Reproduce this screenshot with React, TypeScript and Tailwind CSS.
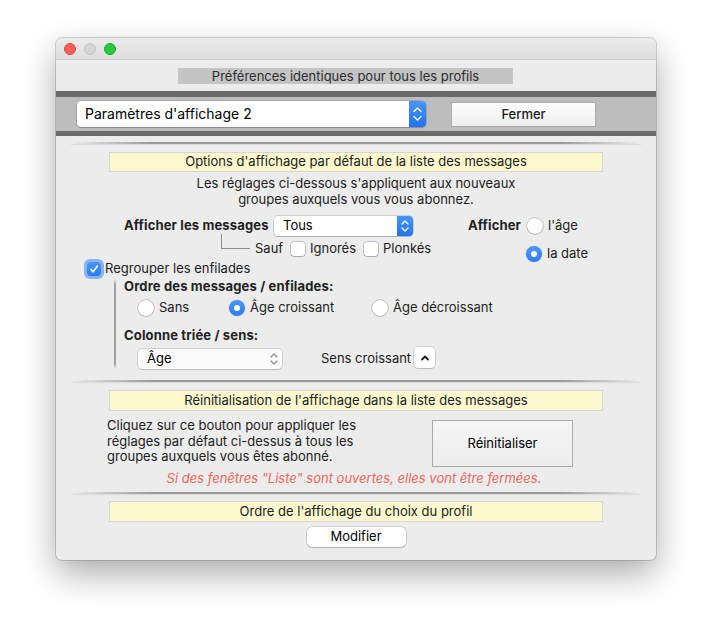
import React from "react";

function BlueStepper({ h, w }: { h: number; w: number }) {
  const big = h > 22;
  return (
    <div
      className={
        "flex shrink-0 items-center justify-center rounded-r-[4px] bg-linear-to-b from-[#4a95fb] to-[#1f72f1] " +
        (big ? "w-[17px] h-[26px]" : "w-[16px] h-[20px]")
      }
    >
      <svg width={w} height={h} viewBox={`0 0 ${w} ${h}`} fill="none">
        {big ? (
          <>
            <path d="M5 10.5 L8.5 7 L12 10.5" stroke="white" strokeWidth="1.4" strokeLinecap="round" strokeLinejoin="round" />
            <path d="M5 15.5 L8.5 19 L12 15.5" stroke="white" strokeWidth="1.4" strokeLinecap="round" strokeLinejoin="round" />
          </>
        ) : (
          <>
            <path d="M5 8 L8 5 L11 8" stroke="white" strokeWidth="1.3" strokeLinecap="round" strokeLinejoin="round" />
            <path d="M5 12 L8 15 L11 12" stroke="white" strokeWidth="1.3" strokeLinecap="round" strokeLinejoin="round" />
          </>
        )}
      </svg>
    </div>
  );
}

function Radio({ checked }: { checked?: boolean }) {
  return checked ? (
    <span className="flex h-[16px] w-[16px] shrink-0 items-center justify-center rounded-full bg-linear-to-b from-[#4b96fb] to-[#2a7df5] shadow-[0_0_0_0.5px_rgba(0,0,0,0.15)]">
      <span className="block h-[6px] w-[6px] rounded-full bg-white" />
    </span>
  ) : (
    <span className="block h-[16px] w-[16px] shrink-0 rounded-full bg-white shadow-[0_0_0_0.5px_rgba(0,0,0,0.35),0_1px_1px_rgba(0,0,0,0.12)]" />
  );
}

function Check({ checked }: { checked?: boolean }) {
  return checked ? (
    <span className="flex h-[14px] w-[14px] shrink-0 items-center justify-center rounded-[3px] bg-linear-to-b from-[#4b96fb] to-[#2a7df5] ring-[3px] ring-[#8ab5f5]">
      <svg width="12" height="12" viewBox="0 0 12 12" fill="none">
        <path d="M2.8 6.3 L5 8.8 L9.3 3.2" stroke="white" strokeWidth="1.6" strokeLinecap="round" strokeLinejoin="round" />
      </svg>
    </span>
  ) : (
    <span className="block h-[14px] w-[14px] shrink-0 rounded-[3px] bg-white shadow-[0_0_0_0.5px_rgba(0,0,0,0.35),0_1px_1px_rgba(0,0,0,0.12)]" />
  );
}

function Separator({ mt }: { mt: string }) {
  return (
    <div className={mt + " mx-[15px] h-[2px] shrink-0 bg-[linear-gradient(to_right,transparent,#9a9a9a_14%,#9a9a9a_86%,transparent)] shadow-[0_1px_1px_rgba(0,0,0,0.08)]"} />
  );
}

function YellowHeader({ mt, h, children }: { mt: string; h: string; children: React.ReactNode }) {
  return (
    <div
      className={
        mt +
        " " +
        h +
        " ml-[53px] flex w-[494px] shrink-0 items-center justify-center border border-[#d6d6d6] bg-[#fdf8cd] text-[13px] text-[#222]"
      }
    >
      {children}
    </div>
  );
}

export default function App() {
  return (
    <div className="h-[634px] w-[712px] overflow-hidden bg-white pl-[56px] pt-[38px] font-['Inter','Liberation_Sans',sans-serif] text-[#222]">
      <div className="flex h-[522px] w-[600px] flex-col overflow-hidden rounded-[6px] bg-[#ececec] shadow-[0_14px_34px_rgba(0,0,0,0.33),0_0_0_1px_rgba(0,0,0,0.16)]">
        {/* title bar */}
        <div className="flex h-[22px] shrink-0 items-center gap-[8px] border-b border-[#c9c9c9] bg-linear-to-b from-[#ebebeb] to-[#dedede] pl-[8px]">
          <span className="block h-[12px] w-[12px] rounded-full border border-[#e0443e] bg-[#fe5f57]" />
          <span className="block h-[12px] w-[12px] rounded-full border border-[#c2c2c2] bg-[#d4d4d4]" />
          <span className="block h-[12px] w-[12px] rounded-full border border-[#1dab2a] bg-[#28c840]" />
        </div>

        {/* gray header */}
        <div className="ml-[122px] mt-[8px] flex h-[16px] w-[335px] shrink-0 items-center justify-center bg-[#c4c4c4] pt-[1px] text-[13px] text-[#2c2c2c]">
          Préférences identiques pour tous les profils
        </div>

        {/* band */}
        <div className="mt-[7px] h-[6px] shrink-0 bg-[#6a6a6a]" />
        <div className="flex h-[34px] shrink-0 items-start bg-[#bdbdbd]">
          <div className="ml-[21px] mt-[4px] flex h-[26px] w-[349px] items-center rounded-[4px] bg-white shadow-[0_0_0_0.5px_rgba(0,0,0,0.25),0_1px_1px_rgba(0,0,0,0.15)]">
            <span className="flex-1 pb-[1px] pl-[8px] text-[14px] text-black">Paramètres d'affichage 2</span>
            <BlueStepper h={26} w={17} />
          </div>
          <div className="ml-[25px] mt-[5px] flex h-[25px] w-[145px] items-center justify-center border border-[#ababab] bg-linear-to-b from-[#fdfdfd] to-[#eeeeee] text-[13px] font-medium text-[#1a1a1a]">
            Fermer
          </div>
        </div>
        <div className="h-[5px] shrink-0 bg-[#6a6a6a]" />

        <Separator mt="mt-[6px]" />

        <YellowHeader mt="mt-[8px]" h="h-[20px]">Options d'affichage par défaut de la liste des messages</YellowHeader>

        <div className="mt-[3px] text-center text-[13px] leading-[16px] text-[#222]">
          Les réglages ci-dessous s'appliquent aux nouveaux
          <br />
          groupes auxquels vous vous abonnez.
        </div>

        {/* block B */}
        <div className="mt-[9px] flex shrink-0 text-[13px]">
          <div className="flex w-[412px] shrink-0 flex-col">
            <div className="flex h-[20px] items-center pl-[68px]">
              <span className="w-[144px] font-bold tracking-[0.15px] whitespace-nowrap">Afficher les messages</span>
              <div className="ml-[6px] flex h-[20px] w-[139px] items-center rounded-[4px] bg-white shadow-[0_0_0_0.5px_rgba(0,0,0,0.25),0_1px_1px_rgba(0,0,0,0.15)]">
                <span className="flex-1 pl-[9px] text-black">Tous</span>
                <BlueStepper h={20} w={16} />
              </div>
            </div>
            <div className="mt-[6px] flex h-[14px] items-center">
              <div className="-mt-[8px] ml-[165px] h-[15px] w-[29px] shrink-0 self-start border-b border-l border-[#8c8c8c]" />
              <span className="ml-[5px] w-[27px] shrink-0">Sauf</span>
              <div className="ml-[9px] flex"><Check /></div>
              <span className="ml-[5px] w-[49px] shrink-0">Ignorés</span>
              <div className="ml-[5px] flex"><Check /></div>
              <span className="ml-[5px] whitespace-nowrap">Plonkés</span>
            </div>
            <div className="mt-[5px] flex h-[16px] items-center">
              <div className="ml-[31px] flex"><Check checked /></div>
              <span className="ml-[4px]">Regrouper les enfilades</span>
            </div>
            <div className="mt-[1px] flex">
              <div className="ml-[58px] w-[2px] shrink-0 bg-[linear-gradient(to_bottom,transparent,#a0a0a0_8%,#a0a0a0_94%,transparent)]" />
              <div className="ml-[8px] flex shrink-0 flex-col">
                <span className="leading-[16px] font-bold tracking-[0.15px]">Ordre des messages / enfilades:</span>
                <div className="mt-[6px] flex h-[16px] items-center">
                  <div className="ml-[14px] flex w-[91px] shrink-0 items-center">
                    <Radio />
                    <span className="ml-[5px]">Sans</span>
                  </div>
                  <div className="flex w-[143px] shrink-0 items-center">
                    <Radio checked />
                    <span className="ml-[5px]">Âge croissant</span>
                  </div>
                  <div className="flex shrink-0 items-center whitespace-nowrap">
                    <Radio />
                    <span className="ml-[5px]">Âge décroissant</span>
                  </div>
                </div>
                <span className="mt-[11px] leading-[16px] font-bold tracking-[0.15px]">Colonne triée / sens:</span>
                <div className="mt-[4px] flex h-[22px] items-start">
                  <div className="ml-[14px] mt-[2px] flex h-[20px] w-[144px] shrink-0 items-center rounded-[4px] bg-[#fbfbfb] shadow-[0_0_0_0.5px_rgba(0,0,0,0.22),0_1px_1px_rgba(0,0,0,0.1)]">
                    <span className="flex-1 pl-[9px] text-black">Âge</span>
                    <svg width="14" height="20" viewBox="0 0 14 20" fill="none" className="mr-[1px]">
                      <path d="M4 8 L7 5 L10 8" stroke="#8a8a8a" strokeWidth="1.2" strokeLinecap="round" strokeLinejoin="round" />
                      <path d="M4 12 L7 15 L10 12" stroke="#8a8a8a" strokeWidth="1.2" strokeLinecap="round" strokeLinejoin="round" />
                    </svg>
                  </div>
                  <span className="ml-[39px] mt-[3px] w-[89px] shrink-0 leading-[16px] whitespace-nowrap">Sens croissant</span>
                  <div className="ml-[4px] flex h-[21px] w-[21px] shrink-0 items-center justify-center rounded-[4px] bg-white shadow-[0_0_0_0.5px_rgba(0,0,0,0.22),0_1px_1px_rgba(0,0,0,0.12)]">
                    <svg width="12" height="12" viewBox="0 0 12 12" fill="none">
                      <path d="M3 7.5 L6 4.5 L9 7.5" stroke="#1a1a1a" strokeWidth="1.8" strokeLinecap="round" strokeLinejoin="round" />
                    </svg>
                  </div>
                </div>
              </div>
            </div>
          </div>
          <div className="flex flex-col">
            <div className="flex h-[20px] items-center">
              <span className="font-bold tracking-[0.15px]">Afficher</span>
              <div className="ml-[6px] flex"><Radio /></div>
              <span className="ml-[5px]">l'âge</span>
            </div>
            <div className="mt-[10px] flex h-[16px] items-center pl-[58px]">
              <Radio checked />
              <span className="ml-[5px]">la date</span>
            </div>
          </div>
        </div>

        <Separator mt="mt-[11px]" />

        <YellowHeader mt="mt-[8px]" h="h-[21px]">Réinitialisation de l'affichage dans la liste des messages</YellowHeader>

        <div className="mt-[7px] flex shrink-0 text-[13px]">
          <div className="ml-[51px] w-[325px] shrink-0 leading-[15.5px]">
            Cliquez sur ce bouton pour appliquer les
            <br />
            réglages par défaut ci-dessus à tous les
            <br />
            groupes auxquels vous êtes abonné.
          </div>
          <div className="mt-[2px] flex h-[47px] w-[141px] shrink-0 items-center justify-center border border-[#a9a9a9] bg-linear-to-b from-[#f6f6f6] to-[#ececec] text-black">
            Réinitialiser
          </div>
        </div>

        <div className="mt-[3px] pr-[4px] text-center text-[13px] leading-[16px] italic text-[#ef6658]">
          Si des fenêtres "Liste" sont ouvertes, elles vont être fermées.
        </div>

        <Separator mt="mt-[6px]" />

        <YellowHeader mt="mt-[7px]" h="h-[21px]">Ordre de l'affichage du choix du profil</YellowHeader>

        <div className="mt-[5px] flex h-[20px] w-[99px] shrink-0 items-center justify-center self-center rounded-[5px] bg-white text-[13px] text-black shadow-[0_0_0_0.5px_rgba(0,0,0,0.25),0_1px_1px_rgba(0,0,0,0.15)]">
          Modifier
        </div>
      </div>
    </div>
  );
}
